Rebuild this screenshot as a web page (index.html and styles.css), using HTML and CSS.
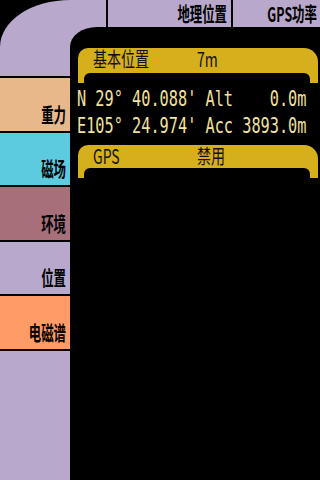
FILE: index.html
```html
<!DOCTYPE html>
<html>
<head>
<meta charset="utf-8">
<link rel="stylesheet" href="styles.css">
</head>
<body>
<div class="screen">
  <div class="side">
    <div class="seg elbow"></div>
    <div class="seg peach"><span class="lbl">重力</span></div>
    <div class="seg cyan"><span class="lbl">磁场</span></div>
    <div class="seg mauve"><span class="lbl">环境</span></div>
    <div class="seg lav"><span class="lbl">位置</span></div>
    <div class="seg orange"><span class="lbl">电磁谱</span></div>
    <div class="seg lav fill"></div>
  </div>
  <div class="main">
    <div class="topbar">
      <div class="arm"></div>
      <div class="tab t1"><span class="lbl">地理位置</span></div>
      <div class="tab t2"><span class="lbl">GPS功率</span></div>
    </div>
    <div class="content">
      <section class="panel">
        <div class="frame">
          <div class="head"><span class="hk"><span class="ht">基本位置</span></span><span class="ht">7m</span></div>
          <div class="hole"></div>
        </div>
        <pre class="data">N 29° 40.088' Alt    0.0m
E105° 24.974' Acc 3893.0m</pre>
      </section>
      <section class="panel second">
        <div class="frame">
          <div class="head short"><span class="hk"><span class="ht">GPS</span></span><span class="ht">禁用</span></div>
          <div class="hole"></div>
        </div>
      </section>
    </div>
  </div>
</div>
</body>
</html>
```
FILE: styles.css
```css
html, body {
  margin: 0;
  padding: 0;
  background: #000;
}
.screen {
  width: 320px;
  height: 480px;
  display: flex;
  overflow: hidden;
  background: #000;
}
.side {
  width: 70px;
  flex: 0 0 70px;
  display: flex;
  flex-direction: column;
  gap: 2px;
}
.seg {
  flex: 0 0 52.6px;
  display: flex;
  justify-content: flex-end;
  align-items: flex-end;
  padding: 0 4px 6px 0;
  box-sizing: border-box;
}
.elbow {
  flex: 0 0 76px;
  background: #b8a8cb;
  border-top-left-radius: 70px 47px;
}
.peach { background: #e8b88a; }
.cyan { background: #5ccbe0; }
.mauve { background: #a66f79; }
.lav { background: #b8a8cb; }
.orange { background: #ff9b66; }
.fill { flex: 1 1 auto; }

.lbl {
  display: inline-block;
  font-family: "Noto Sans CJK SC", sans-serif;
  font-weight: 700;
  font-size: 20px;
  line-height: 20px;
  color: #000;
  transform: scaleX(0.62);
  transform-origin: right bottom;
  white-space: nowrap;
}

.main {
  flex: 0 0 250px;
  width: 250px;
  min-width: 0;
  display: flex;
  flex-direction: column;
  background: #b8a8cb;
}
.topbar {
  height: 27px;
  flex: 0 0 27px;
  display: flex;
}
.arm {
  width: 36px;
  flex: 0 0 36px;
  background: #b8a8cb;
}
.tab {
  border-left: 2px solid #000;
  background: #b8a8cb;
  display: flex;
  justify-content: flex-end;
  align-items: flex-end;
  padding-bottom: 3px;
  box-sizing: border-box;
  min-width: 0;
}
.t1 { flex: 0 0 125px; padding-right: 4px; }
.t2 { flex: 1 1 auto; padding-right: 3px; }

.content {
  flex: 1 1 auto;
  min-width: 0;
  background: #000;
  border-top-left-radius: 27px 20px;
  display: flex;
  flex-direction: column;
}
.panel {
  margin: 21px 2px 0 8px;
  min-width: 0;
}
.panel.second {
  margin-top: 6px;
}
.frame {
  background: #d6b01c;
  border-radius: 10px 14px 0 0;
  padding: 0 8px 0 6px;
}
.head {
  height: 25px;
  display: flex;
  align-items: flex-start;
  padding-left: 9px;
}
.head.short {
  height: 23px;
}
.hk {
  width: 104px;
  flex: 0 0 104px;
}
.ht {
  display: inline-block;
  font-family: "Noto Sans CJK SC", sans-serif;
  font-weight: 400;
  font-size: 20px;
  line-height: 22px;
  color: #111;
  transform: scaleX(0.7);
  transform-origin: left top;
  white-space: nowrap;
}
.hole {
  height: 10px;
  background: #000;
  border-radius: 6px 6px 0 0;
}
.data {
  width: 240px;
  margin: 2px 0 0 -1px;
  font-family: "DejaVu Sans Mono", monospace;
  font-size: 22px;
  line-height: 27px;
  color: #f3e29e;
  transform: scaleX(0.693);
  transform-origin: left top;
  white-space: pre;
  overflow: visible;
}
```
